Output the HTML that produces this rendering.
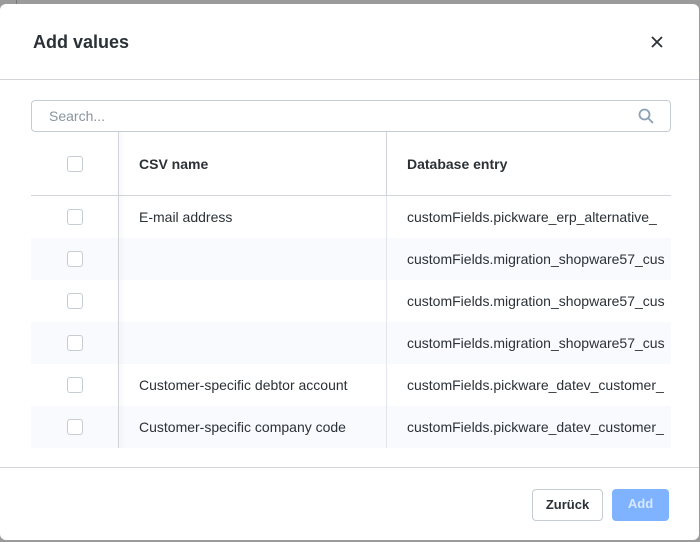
<!DOCTYPE html>
<html><head><style>
*{margin:0;padding:0;box-sizing:border-box}
body{width:700px;height:542px;background:#9b9b9b;font-family:"Liberation Sans",sans-serif;position:relative;overflow:hidden;color:#2b3136}
.m{position:absolute;left:0;top:4px;width:699px;height:536px;background:#fff;border-radius:6px;overflow:hidden}
.h{height:76px;border-bottom:1px solid #d1d5da;position:relative}
.h h1{position:absolute;left:33px;top:28px;font-size:18px;font-weight:bold;color:#2b3136}
.s{position:absolute;left:31px;top:96px;width:640px;height:32px;border:1px solid #c5ccd3;border-radius:4px;font-size:14px;color:#8a949e;padding:7px 17px}
.t{position:absolute;left:31px;top:128px;width:640px;height:316px;overflow:hidden}
.r{position:absolute;left:0;width:640px;height:42px;font-size:14px;color:#2b3136}
.r.z{background:#f9fafe}
.cb{position:absolute;left:36px;width:16px;height:16px;border:1px solid #c5ccd3;border-radius:3px;background:#fff}
.c1{position:absolute;left:108px;top:13px;white-space:nowrap}
.c2{position:absolute;left:376px;top:13px;white-space:nowrap}
.vl{position:absolute;left:87px;top:0;width:1px;height:316px;background:#d1d5da;box-shadow:2px 0 4px rgba(0,0,0,.12)}
.vl2{position:absolute;left:355px;top:0;width:1px;height:64px;background:#d1d5da}
.f{position:absolute;left:0;top:463px;width:699px;border-top:1px solid #d1d5da}
.b{position:absolute;top:485px;height:32px;border-radius:4px;font-size:13px;font-weight:bold;text-align:center;line-height:30px}
</style></head><body>
<div style="position:absolute;left:16px;top:0;width:1px;height:4px;background:#777"></div>
<div class="m">
<div class="h"><h1>Add values</h1>
<svg style="position:absolute;left:651px;top:32px" width="12" height="12" viewBox="0 0 12 12"><path d="M1 1L11 11M11 1L1 11" stroke="#2b3136" stroke-width="1.8"/></svg></div>
<div class="s">Search...
<svg style="position:absolute;right:16px;top:7px" width="16" height="16" viewBox="0 0 16 16"><circle cx="6.5" cy="6.5" r="5" fill="none" stroke="#8aa0b8" stroke-width="1.8"/><path d="M10.5 10.5L14.5 14.5" stroke="#8aa0b8" stroke-width="1.8" stroke-linecap="round"/></svg></div>
<div class="t">
<div class="r" style="top:0;height:64px;border-bottom:1px solid #d1d5da"><div class="cb" style="top:24px"></div><div class="c1" style="top:24px;font-weight:bold">CSV name</div><div class="c2" style="top:24px;font-weight:bold">Database entry</div></div>
<div class="r" style="top:64px"><div class="cb" style="top:13px"></div><div class="c1">E-mail address</div><div class="c2">customFields.pickware_erp_alternative_</div></div>
<div class="r z" style="top:106px"><div class="cb" style="top:13px"></div><div class="c2">customFields.migration_shopware57_cus</div></div>
<div class="r" style="top:148px"><div class="cb" style="top:13px"></div><div class="c2">customFields.migration_shopware57_cus</div></div>
<div class="r z" style="top:190px"><div class="cb" style="top:13px"></div><div class="c2">customFields.migration_shopware57_cus</div></div>
<div class="r" style="top:232px"><div class="cb" style="top:13px"></div><div class="c1">Customer-specific debtor account</div><div class="c2">customFields.pickware_datev_customer_</div></div>
<div class="r z" style="top:274px"><div class="cb" style="top:13px"></div><div class="c1">Customer-specific company code</div><div class="c2">customFields.pickware_datev_customer_</div></div>
<div class="vl"></div><div class="vl2"></div>
<div style="position:absolute;left:355px;top:64px;width:1px;height:252px;background:#e3e6ea"></div>
</div>
<div class="f"></div>
<div class="b" style="left:532px;width:71px;border:1px solid #c5ccd3;color:#2b3136">Zurück</div>
<div class="b" style="left:612px;width:57px;background:#7fb3ff;color:#d7e8ff">Add</div>
</div>
</body></html>
